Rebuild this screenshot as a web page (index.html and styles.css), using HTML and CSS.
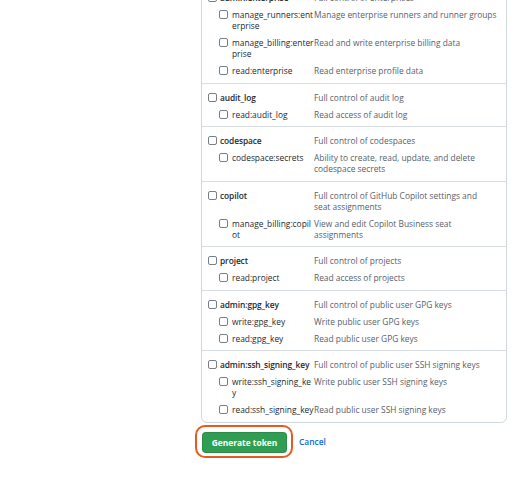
FILE: index.html
```html
<!DOCTYPE html>
<html lang="en">
<head>
    <meta charset="UTF-8" />
    <meta name="viewport" content="width=device-width, initial-scale=1.0" />
    <title>New personal access token</title>
    <link rel="stylesheet" href="styles.css">
</head>
<body>
    <div class="page">
        <div class="scopes">
            <div class="scope-group">
                <label class="scope parent">
                    <span class="name"><input type="checkbox"> admin:enterprise</span>
                    <span class="desc">Full control of enterprises</span>
                </label>
                <label class="scope child">
                    <span class="name"><input type="checkbox"><span class="text">manage_runners:enterprise</span></span>
                    <span class="desc">Manage enterprise runners and runner groups</span>
                </label>
                <label class="scope child">
                    <span class="name"><input type="checkbox"><span class="text">manage_billing:enterprise</span></span>
                    <span class="desc">Read and write enterprise billing data</span>
                </label>
                <label class="scope child">
                    <span class="name"><input type="checkbox"><span class="text">read:enterprise</span></span>
                    <span class="desc">Read enterprise profile data</span>
                </label>
            </div>

            <div class="scope-group">
                <label class="scope parent">
                    <span class="name"><input type="checkbox"><span class="text">audit_log</span></span>
                    <span class="desc">Full control of audit log</span>
                </label>
                <label class="scope child">
                    <span class="name"><input type="checkbox"><span class="text">read:audit_log</span></span>
                    <span class="desc">Read access of audit log</span>
                </label>
            </div>

            <div class="scope-group">
                <label class="scope parent">
                    <span class="name"><input type="checkbox"><span class="text">codespace</span></span>
                    <span class="desc">Full control of codespaces</span>
                </label>
                <label class="scope child">
                    <span class="name"><input type="checkbox"><span class="text">codespace:secrets</span></span>
                    <span class="desc">Ability to create, read, update, and delete codespace secrets</span>
                </label>
            </div>

            <div class="scope-group narrow">
                <label class="scope parent">
                    <span class="name"><input type="checkbox"><span class="text">copilot</span></span>
                    <span class="desc">Full control of GitHub Copilot settings and seat assignments</span>
                </label>
                <label class="scope child">
                    <span class="name"><input type="checkbox"><span class="text">manage_billing:copilot</span></span>
                    <span class="desc">View and edit Copilot Business seat assignments</span>
                </label>
            </div>

            <div class="scope-group">
                <label class="scope parent">
                    <span class="name"><input type="checkbox"><span class="text">project</span></span>
                    <span class="desc">Full control of projects</span>
                </label>
                <label class="scope child">
                    <span class="name"><input type="checkbox"><span class="text">read:project</span></span>
                    <span class="desc">Read access of projects</span>
                </label>
            </div>

            <div class="scope-group">
                <label class="scope parent">
                    <span class="name"><input type="checkbox"><span class="text">admin:gpg_key</span></span>
                    <span class="desc">Full control of public user GPG keys</span>
                </label>
                <label class="scope child">
                    <span class="name"><input type="checkbox"><span class="text">write:gpg_key</span></span>
                    <span class="desc">Write public user GPG keys</span>
                </label>
                <label class="scope child">
                    <span class="name"><input type="checkbox"><span class="text">read:gpg_key</span></span>
                    <span class="desc">Read public user GPG keys</span>
                </label>
            </div>

            <div class="scope-group">
                <label class="scope parent">
                    <span class="name"><input type="checkbox"><span class="text">admin:ssh_signing_key</span></span>
                    <span class="desc">Full control of public user SSH signing keys</span>
                </label>
                <label class="scope child">
                    <span class="name"><input type="checkbox"><span class="text">write:ssh_signing_key</span></span>
                    <span class="desc">Write public user SSH signing keys</span>
                </label>
                <label class="scope child">
                    <span class="name"><input type="checkbox"><span class="text">read:ssh_signing_key</span></span>
                    <span class="desc">Read public user SSH signing keys</span>
                </label>
            </div>
        </div>

        <div class="actions">
            <span class="highlight">
                <button class="btn-primary" type="submit">Generate token</button>
            </span>
            <a class="cancel" href="#">Cancel</a>
        </div>
    </div>
</body>
</html>
```

FILE: styles.css
```css
body {
    margin: 0;
    background: #fff;
    font-family: "Open Sans", "Noto Sans", Arial, sans-serif;
    font-size: 8.4px;
    line-height: 11px;
    color: #24292f;
}
.page {
    margin-left: 201px;
    width: 306px;
}
.scopes {
    margin-top: -17px;
    border: 1px solid #d0d7de;
    border-radius: 6px;
}
.scope-group {
    padding: 5px 0 3.5px;
    border-top: 1px solid #d8dee4;
}
.scope-group:first-child {
    border-top: none;
}
.scope {
    display: grid;
    grid-template-columns: 106px 186px;
    padding: 3px 0 3px 6px;
}
.scope.child {
    grid-template-columns: 95px 186px;
    padding-left: 17px;
}
.narrow .scope {
    grid-template-columns: 106px 176px;
}
.narrow .scope.child {
    grid-template-columns: 95px 176px;
}
.name {
    display: flex;
    align-items: flex-start;
    gap: 3px;
    word-break: break-all;
}
.parent .name {
    font-weight: 600;
    letter-spacing: -0.1px;
}
.child .name {
    gap: 4px;
}
.desc {
    color: #57606a;
}
input[type="checkbox"] {
    appearance: none;
    -webkit-appearance: none;
    flex: none;
    width: 9px;
    height: 9px;
    margin: 1px 0 0;
    border: 1px solid #767f89;
    border-radius: 2px;
    background: #fff;
}
.actions {
    display: flex;
    align-items: center;
    gap: 6px;
    margin: 2px 0 0 -6px;
}
.highlight {
    display: inline-flex;
    padding: 5px 4px 3px 5px;
    border: 2px solid #e8591f;
    border-radius: 10px;
}
.btn-primary {
    width: 85px;
    height: 21px;
    padding: 0;
    font-family: inherit;
    font-size: 8.4px;
    font-weight: 700;
    color: #fff;
    background: #2f9e52;
    border: 1px solid rgba(27, 31, 36, 0.15);
    border-radius: 4px;
    cursor: pointer;
}
.cancel {
    color: #0969da;
    font-weight: 600;
    text-decoration: none;
}
```
